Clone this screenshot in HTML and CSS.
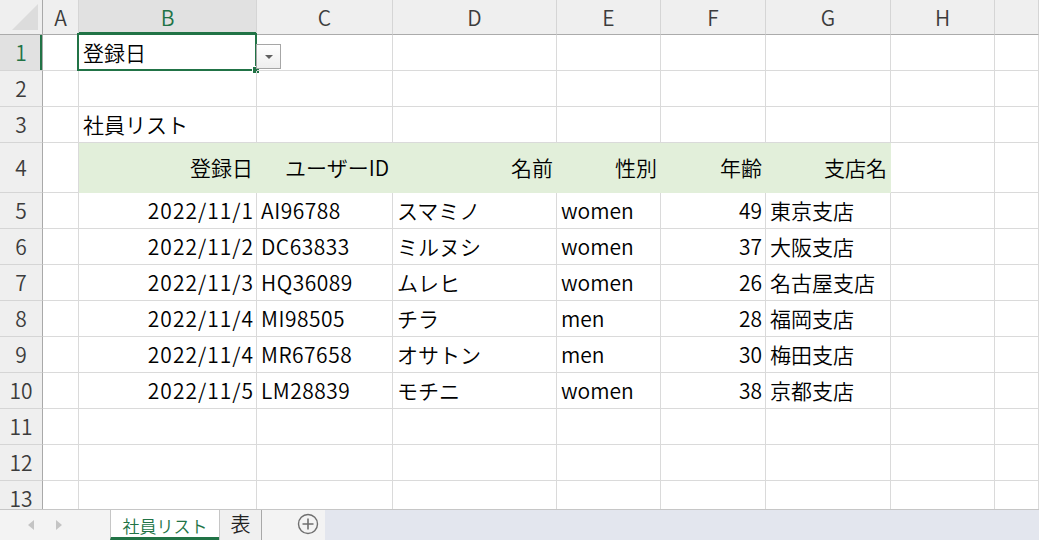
FILE: index.html
```html
<!DOCTYPE html>
<html lang="ja">
<head>
<meta charset="utf-8">
<title>社員リスト</title>
<link rel="stylesheet" href="styles.css">
</head>
<body>
<div class="app">
  <div class="sheet">
    <div class="row hdr">
      <div class="c rh corner"><svg width="42" height="34" viewBox="0 0 42 34"><polygon points="38,4 38,30 12,30" fill="#dcdcdc"/></svg></div>
      <div class="c ch">A</div><div class="c ch selh">B</div><div class="c ch">C</div><div class="c ch">D</div><div class="c ch">E</div><div class="c ch">F</div><div class="c ch">G</div><div class="c ch">H</div><div class="c ch"></div>
    </div>
    <div class="row">
      <div class="c rh selr">1</div><div class="c"></div>
      <div class="c active">登録日<span class="selbox"><span class="handle"></span></span><span class="dd"><span class="tri"></span></span></div>
      <div class="c"></div><div class="c"></div><div class="c"></div><div class="c"></div><div class="c"></div><div class="c"></div><div class="c"></div>
    </div>
    <div class="row">
      <div class="c rh">2</div><div class="c"></div><div class="c"></div><div class="c"></div><div class="c"></div><div class="c"></div><div class="c"></div><div class="c"></div><div class="c"></div><div class="c"></div>
    </div>
    <div class="row">
      <div class="c rh">3</div><div class="c"></div><div class="c">社員リスト</div><div class="c"></div><div class="c"></div><div class="c"></div><div class="c"></div><div class="c"></div><div class="c"></div><div class="c"></div>
    </div>
    <div class="row tall">
      <div class="c rh">4</div><div class="c"></div>
      <div class="c g r">登録日</div><div class="c g r">ユーザーID</div><div class="c g r">名前</div><div class="c g r">性別</div><div class="c g r">年齢</div><div class="c g r">支店名</div>
      <div class="c"></div><div class="c"></div>
    </div>
    <div class="row">
      <div class="c rh">5</div><div class="c"></div><div class="c r d">2022/11/1</div><div class="c n">AI96788</div><div class="c">スマミノ</div><div class="c">women</div><div class="c r">49</div><div class="c">東京支店</div><div class="c"></div><div class="c"></div>
    </div>
    <div class="row">
      <div class="c rh">6</div><div class="c"></div><div class="c r d">2022/11/2</div><div class="c n">DC63833</div><div class="c">ミルヌシ</div><div class="c">women</div><div class="c r">37</div><div class="c">大阪支店</div><div class="c"></div><div class="c"></div>
    </div>
    <div class="row">
      <div class="c rh">7</div><div class="c"></div><div class="c r d">2022/11/3</div><div class="c n">HQ36089</div><div class="c">ムレヒ</div><div class="c">women</div><div class="c r">26</div><div class="c">名古屋支店</div><div class="c"></div><div class="c"></div>
    </div>
    <div class="row">
      <div class="c rh">8</div><div class="c"></div><div class="c r d">2022/11/4</div><div class="c n">MI98505</div><div class="c">チラ</div><div class="c">men</div><div class="c r">28</div><div class="c">福岡支店</div><div class="c"></div><div class="c"></div>
    </div>
    <div class="row">
      <div class="c rh">9</div><div class="c"></div><div class="c r d">2022/11/4</div><div class="c n">MR67658</div><div class="c">オサトン</div><div class="c">men</div><div class="c r">30</div><div class="c">梅田支店</div><div class="c"></div><div class="c"></div>
    </div>
    <div class="row">
      <div class="c rh">10</div><div class="c"></div><div class="c r d">2022/11/5</div><div class="c n">LM28839</div><div class="c">モチニ</div><div class="c">women</div><div class="c r">38</div><div class="c">京都支店</div><div class="c"></div><div class="c"></div>
    </div>
    <div class="row">
      <div class="c rh">11</div><div class="c"></div><div class="c"></div><div class="c"></div><div class="c"></div><div class="c"></div><div class="c"></div><div class="c"></div><div class="c"></div><div class="c"></div>
    </div>
    <div class="row">
      <div class="c rh">12</div><div class="c"></div><div class="c"></div><div class="c"></div><div class="c"></div><div class="c"></div><div class="c"></div><div class="c"></div><div class="c"></div><div class="c"></div>
    </div>
    <div class="row">
      <div class="c rh">13</div><div class="c"></div><div class="c"></div><div class="c"></div><div class="c"></div><div class="c"></div><div class="c"></div><div class="c"></div><div class="c"></div><div class="c"></div>
    </div>
  </div>
  <div class="tabbar">
    <div class="tabnav"><span class="arr al"></span><span class="arr ar"></span></div>
    <div class="tab on">社員リスト</div>
    <div class="tab off">表</div>
    <div class="add">
      <svg width="22" height="22" viewBox="0 0 22 22"><circle cx="11" cy="11" r="9.5" fill="none" stroke="#6f6f6f" stroke-width="1.4"/><path d="M11 5.5v11M5.5 11h11" stroke="#6f6f6f" stroke-width="1.6"/></svg>
    </div>
    <div class="rest"></div>
  </div>
</div>
</body>
</html>
```
FILE: styles.css
```css
html, body {
  margin: 0;
  padding: 0;
  background: #fff;
}
body {
  font-family: "Noto Sans CJK JP", "Noto Sans", sans-serif;
  font-weight: 350;
  color: #000;
  overflow: hidden;
}
.app {
  width: 1039px;
  height: 540px;
  display: flex;
  flex-direction: column;
}
.sheet {
  height: 509px;
  overflow: hidden;
  display: flex;
  flex-direction: column;
  flex: none;
}
.row {
  display: grid;
  grid-template-columns: 43px 36px 178px 136px 164px 104px 105px 125px 104px 1fr;
  height: 36px;
  flex: none;
}
.row.hdr { height: 35px; }
.row.tall { height: 50px; }
.c {
  box-sizing: border-box;
  border-right: 1px solid #dadada;
  border-bottom: 1px solid #dadada;
  display: flex;
  align-items: center;
  padding: 0 3px 0 4px;
  font-size: 21px;
  white-space: nowrap;
  position: relative;
  line-height: 1;
}
.c.r { justify-content: flex-end; }
.c.d { letter-spacing: 1px; padding-right: 2px; }
.c.n { letter-spacing: 0.5px; }
.c.g {
  background: #e2efda;
  border-color: #e2efda;
}
.hdr .c {
  background: #efefef;
  border-bottom-color: #ababab;
  border-right-color: #d5d5d5;
  justify-content: center;
  color: #3c3c3c;
  font-size: 21px;
  padding: 0;
}
.rh {
  background: #efefef;
  border-right-color: #a9a9a9 !important;
  border-bottom-color: #d5d5d5;
  justify-content: center;
  color: #3c3c3c;
  font-size: 21px;
  padding: 0;
}
.corner {
  align-items: stretch;
}
.corner svg { display: block; }
.hdr .selh {
  background: #e1e1e1;
  color: #217346;
  box-shadow: inset 0 -2px 0 #217346;
}
.rh.selr {
  background: #e1e1e1;
  color: #217346;
  box-shadow: inset -2px 0 0 #217346;
}
.active { overflow: visible; }
.selbox {
  position: absolute;
  left: -2px;
  top: -2px;
  right: -1px;
  bottom: -1px;
  border: 2px solid #217346;
  pointer-events: none;
}
.handle {
  position: absolute;
  right: -4px;
  bottom: -4px;
  width: 6px;
  height: 6px;
  background: #217346;
  box-shadow: -1px -1px 0 #fff;
}
.dd {
  position: absolute;
  left: 100%;
  top: 9px;
  width: 25px;
  height: 25px;
  box-sizing: border-box;
  border: 1px solid #a6a6a6;
  background: linear-gradient(#ffffff, #eeeeee);
  display: flex;
  align-items: center;
  justify-content: center;
  z-index: 2;
}
.tri {
  width: 0;
  height: 0;
  border-left: 4.5px solid transparent;
  border-right: 4.5px solid transparent;
  border-top: 4px solid #5f5f5f;
  margin-top: 1px;
}
.tabbar {
  height: 31px;
  box-sizing: border-box;
  border-top: 1px solid #c6c6c6;
  display: flex;
  background: #e3e6ee;
  flex: none;
}
.tabnav {
  width: 110px;
  background: #f3f3f3;
  display: flex;
  align-items: center;
  gap: 22px;
  padding-left: 28px;
  box-sizing: border-box;
}
.arr {
  width: 0;
  height: 0;
  border-top: 5px solid transparent;
  border-bottom: 5px solid transparent;
}
.arr.al { border-right: 6px solid #c4c4c4; }
.arr.ar { border-left: 6px solid #c4c4c4; }
.tab {
  box-sizing: border-box;
  display: flex;
  align-items: center;
  justify-content: center;
  line-height: 1;
}
.tab.on {
  width: 109px;
  background: #ffffff;
  color: #217346;
  font-size: 17px;
  border-left: 1px solid #c6c6c6;
  border-bottom: 3px solid #217346;
  padding-top: 3px;
}
.tab.off {
  width: 43px;
  background: #f0f0f0;
  color: #222;
  font-size: 20px;
  border-left: 1px solid #c6c6c6;
  border-right: 1px solid #a8a8a8;
  padding-bottom: 2px;
}
.add {
  width: 63px;
  background: #f3f3f3;
  display: flex;
  align-items: center;
  justify-content: flex-start;
  padding-left: 35px;
  padding-bottom: 2px;
  box-sizing: border-box;
}
.add svg { display: block; }
.rest { flex: 1; }
```
